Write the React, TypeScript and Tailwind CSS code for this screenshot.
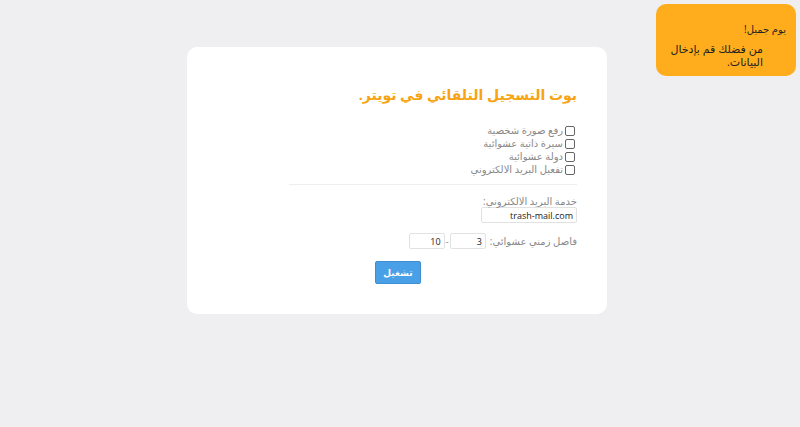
import React from 'react';

const FONT = { fontFamily: '"Open Sans", "DejaVu Sans", sans-serif' };

const OPTIONS = ['رفع صورة شخصية', 'سيرة ذاتية عشوائية', 'دولة عشوائية', 'تفعيل البريد الالكتروني'];

function Box() {
  return <span className="inline-block w-[10px] h-[10px] border border-[#666] rounded-[2px] bg-white shrink-0" />;
}

export default function App() {
  return (
    <div className="relative min-h-[427px] bg-[#efeff1] text-[#888]" style={FONT} dir="rtl">
      {/* Toast */}
      <div className="absolute top-[4px] right-[4px] w-[140px] h-[72px] rounded-[10px] bg-[#ffad1c] text-[#222]">
        <div className="pt-[18px] pr-[10px] text-[10px] leading-[14px]">يوم جميل!</div>
        <div className="pt-[6px] pr-[33px] pl-[14px] text-[11px] leading-[13px]">من فضلك قم بإدخال البيانات.</div>
      </div>

      <div className="flex justify-center pt-[47px] pr-[6px]">
        <div className="w-[420px] bg-white rounded-[10px] pt-[36px] pb-[30px] pr-[30px] pl-[30px]">
          <h1 className="text-[14px] leading-[24px] font-bold text-[#f7a312]">بوت التسجيل التلقائي في تويتر.</h1>

          <div className="mt-[17px] mr-[2px] flex flex-col text-[10px] leading-[13px]">
            {OPTIONS.map((o) => (
              <label key={o} className="flex items-center gap-[2px]">
                <Box />
                <span>{o}</span>
              </label>
            ))}
          </div>

          <hr className="mt-[8px] w-[80%] border-0 border-t border-[#eee]" />

          <div className="mt-[9px] text-[10px] leading-[14px]">خدمة البريد الالكتروني:</div>
          <input
            className="mt-[-1px] block w-[96px] h-[16px] border border-[#e2e2e2] rounded-[2px] px-[3px] text-[9px] text-[#222] outline-none"
            defaultValue="trash-mail.com"
            dir="rtl"
            style={FONT}
          />

          <div className="mt-[10px] flex items-center text-[10px] leading-[14px]">
            <span>فاصل زمني عشوائي:</span>
            <input
              className="mr-[4px] w-[36px] h-[16px] border border-[#e2e2e2] rounded-[2px] px-[3px] text-[9px] text-[#222] outline-none"
              defaultValue="3"
              style={FONT}
            />
            <span className="mx-[1px] text-[#999]">-</span>
            <input
              className="w-[36px] h-[16px] border border-[#e2e2e2] rounded-[2px] px-[3px] text-[9px] text-[#222] outline-none"
              defaultValue="10"
              style={FONT}
            />
          </div>

          <div className="mt-[12px] flex justify-center pl-[2px]">
            <button
              type="button"
              className="w-[46px] h-[23px] rounded-[2px] bg-[#4aa0e6] border border-[#3d8fd3] text-white text-[9px] font-bold"
              style={FONT}
            >
              تشغيل
            </button>
          </div>
        </div>
      </div>
    </div>
  );
}
